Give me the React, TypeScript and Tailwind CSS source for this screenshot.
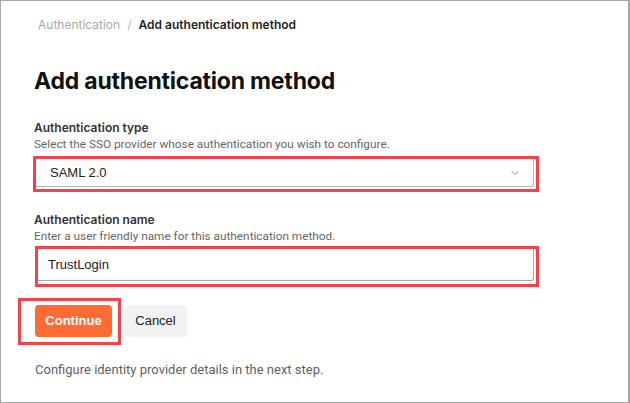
import { ChevronDown } from 'lucide-react';

export default function App() {
  return (
    <div className="w-[630px] h-[403px] bg-white border border-r-2 border-[#a6a6a6] overflow-hidden">
      <div className="pl-[33px] pt-[16px]">
        {/* Breadcrumb */}
        <div className="flex items-center gap-[7px] pl-[4px] h-[16px] text-[12px] font-['Inter',sans-serif]">
          <span className="text-[#a9a9a9]">Authentication</span>
          <span className="text-[#b5b5b5]">/</span>
          <span className="font-semibold text-[#1f1f1f]">Add authentication method</span>
        </div>

        <h1 className="mt-[34px] h-[28px] leading-[28px] text-[23px] font-bold text-[#111] font-['Inter',sans-serif] tracking-[-0.2px]">
          Add authentication method
        </h1>

        {/* Authentication type */}
        <div className="mt-[25px] h-[16px] leading-[16px] text-[12px] font-semibold text-[#333] font-['Inter',sans-serif]">
          Authentication type
        </div>
        <div className="mt-[1px] h-[14px] leading-[14px] text-[11.8px] text-[#666] font-['Roboto',sans-serif]">
          Select the SSO provider whose authentication you wish to configure.
        </div>
        <div className="mt-[5px] -ml-[1px] w-[506px] border-[3px] border-[#f4414a] pr-[2px] pb-[2px]">
          <div className="h-[28px] flex items-center justify-between pl-[14px] pr-[12px] border-r border-b border-[#b8b8b8] rounded-br-[3px]">
            <span className="text-[13px] text-[#222] font-['Liberation_Sans',Arial,sans-serif]">SAML 2.0</span>
            <ChevronDown className="w-[12px] h-[12px] text-[#666]" strokeWidth={1.5} />
          </div>
        </div>

        {/* Authentication name */}
        <div className="mt-[20px] h-[16px] leading-[16px] text-[12px] font-semibold text-[#333] font-['Inter',sans-serif]">
          Authentication name
        </div>
        <div className="mt-[1px] h-[14px] leading-[14px] text-[11.8px] text-[#666] font-['Roboto',sans-serif]">
          Enter a user friendly name for this authentication method.
        </div>
        <div className="mt-[3px] ml-[1px] w-[504px] border-[3px] border-[#f4414a] pr-[2px] pb-[3px]">
          <div className="h-[32px] flex items-center pl-[10px] border-r border-b border-[#a8a8a8] rounded-br-[3px]">
            <span className="text-[13px] text-[#222] font-['Liberation_Sans',Arial,sans-serif]">TrustLogin</span>
          </div>
        </div>

        {/* Buttons */}
        <div className="mt-[11px] flex items-start">
          <div className="-ml-[16px] border-[3px] border-[#f4414a] pl-[14px] pr-[6px] pt-[4px] pb-[5px]">
            <button className="h-[32px] w-[77px] rounded-[4px] bg-[#ff6b33] text-white text-[13px] font-bold font-['Liberation_Sans',Arial,sans-serif]">
              Continue
            </button>
          </div>
          <button className="ml-[3px] mt-[7px] h-[32px] w-[63px] rounded-[4px] bg-[#f2f2f2] text-[#222] text-[13px] font-['Liberation_Sans',Arial,sans-serif]">
            Cancel
          </button>
        </div>

        <p className="mt-[16px] h-[18px] leading-[18px] pl-[1px] text-[13px] text-[#5f5f5f] font-['Roboto',sans-serif]">
          Configure identity provider details in the next step.
        </p>
      </div>
    </div>
  );
}
